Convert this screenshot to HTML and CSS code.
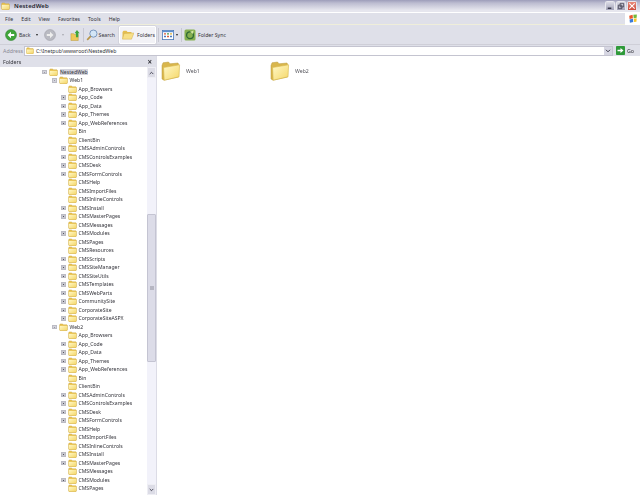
FILE: index.html
```html
<!DOCTYPE html>
<html lang="en">
<head>
<meta charset="utf-8">
<title>NestedWeb</title>
<link rel="stylesheet" href="styles.css">
</head>
<body>
<svg class="defs" width="0" height="0" aria-hidden="true">
  <defs>
    <linearGradient id="fg" x1="0" y1="0" x2="1" y2="1"><stop offset="0" stop-color="#fff8c8"/><stop offset="1" stop-color="#f5d768"/></linearGradient>
    <symbol id="folder" viewBox="0 0 16 14">
      <path d="M1 3.5 2 1.5h4.5l1 1.5H14l1 1v8.5l-1 1H2l-1-1z" fill="#e9c24e" stroke="#c4a244" stroke-width=".7"/>
      <path d="M1.6 5h12.8v7.700H1.6z" fill="url(#fg)"/>
    </symbol>
    <symbol id="bigfolder" viewBox="0 0 20 20">
      <path d="M1 4.5 2 1.8 7.5 1l1.5 1.8 8 -.8 .6 1.2V16L3 19.2 1 18z" fill="#d9b64c" stroke="#b99a3e" stroke-width=".5"/>
      <path d="M2.6 6.5 18.6 3.8 18 15.8 3.2 19.2z" fill="url(#fg)" stroke="#d8b94e" stroke-width=".6"/>
    </symbol>
  </defs>
</svg>
<div class="window">
  <header class="titlebar">
    <svg class="title-icon" viewBox="0 0 16 14"><use href="#folder"/></svg>
    <span class="title-text">NestedWeb</span>
    <div class="caption">
      <span class="cap-btn">
        <svg viewBox="0 0 9 9"><path d="M2 7h4" stroke="#223" stroke-width="1.4"/></svg>
      </span>
      <span class="cap-btn">
        <svg viewBox="0 0 9 9"><path d="M3.5 1.5h4v4h-4zM1.5 3.5h4v4h-4z" fill="none" stroke="#334" stroke-width=".8"/></svg>
      </span>
      <span class="cap-btn close">
        <svg viewBox="0 0 9 9"><path d="M1.5 1.5l6 6M7.5 1.5l-6 6" stroke="#fff" stroke-width="1.2"/></svg>
      </span>
    </div>
  </header>

  <nav class="menubar">
    <span>File</span><span>Edit</span><span>View</span><span>Favorites</span><span>Tools</span><span>Help</span>
    <div class="flag">
      <svg viewBox="0 0 12 12">
        <path d="M1.5 2.2 5.5 1l.4 4-4 1z" fill="#e8542a"/>
        <path d="M6.4 1 10.6 .6 10.4 4.6 6.8 5z" fill="#74b83a"/>
        <path d="M1.9 6.6 5.9 5.6l.4 4-4 1z" fill="#3a7ad8"/>
        <path d="M6.9 5.6l3.5-.4-.3 4-2.8.4z" fill="#f5c52a"/>
      </svg>
    </div>
  </nav>

  <div class="toolbar">
    <svg class="tool-back" viewBox="0 0 12 12"><circle cx="6" cy="6" r="5.5" fill="#3fa53a" stroke="#2c7d2c" stroke-width=".5"/><path d="M9.2 5H6V2.8L2.6 6 6 9.2V7h3.2z" fill="#fff"/></svg>
    <span class="tool-label back-label">Back</span>
    <span class="caret"></span>
    <svg class="tool-fwd" viewBox="0 0 12 12"><circle cx="6" cy="6" r="5.5" fill="#b9bac2" stroke="#9a9ba4" stroke-width=".5"/><path d="M2.8 5H6V2.8L9.4 6 6 9.2V7H2.8z" fill="#eee"/></svg>
    <span class="caret pale"></span>
    <svg class="tool-up" viewBox="0 0 12 13"><path d="M1 5h3l1 1h4v6.5H1z" fill="#eec95a" stroke="#b8963a" stroke-width=".5"/><path d="M6.5 9V4.5H5L7.6 1l2.9 3.500H9V9z" fill="#3fa53a"/></svg>
    <span class="sep tight"></span>
    <svg class="tool-search" viewBox="0 0 12 12"><circle cx="7.400" cy="4.600" r="3.600" fill="#d3e6f7" stroke="#6f8fb8" stroke-width=".9"/><path d="M4.800 7.200 1.200 10.800" stroke="#b8964a" stroke-width="1.700"/></svg>
    <span class="tool-label">Search</span>
    <div class="folders-btn">
      <svg viewBox="0 0 12 10"><path d="M.5 2 1.500.8h3l1 1.200h4v7h-9z" fill="#e3bd50"/><path d="M2 3.500 12 3 9.500 9.200H.5z" fill="#f7df86" stroke="#c9a644" stroke-width=".4"/></svg>
      <span class="tool-label">Folders</span>
    </div>
    <span class="sep wide"></span>
    <svg class="tool-views" viewBox="0 0 12 10">
      <rect x=".4" y=".4" width="11.200" height="9.200" fill="#fff" stroke="#4a78b8" stroke-width=".8"/>
      <path d="M.8.800h10.400v1.400H.8z" fill="#5d8fd0"/>
      <path d="M2 3.200h2v1.400H2z" fill="#d85a3a"/><path d="M5 3.200h2v1.400H5z" fill="#4a9a4a"/><path d="M8 3.200h2v1.400H8z" fill="#e0b23a"/>
      <path d="M2 5.800h2v1.400H2z" fill="#4a78b8"/><path d="M5 5.800h2v1.400H5z" fill="#d85a3a"/><path d="M8 5.800h2v1.400H8z" fill="#4a78b8"/>
    </svg>
    <span class="caret"></span>
    <span class="sep after-views"></span>
    <svg class="tool-sync" viewBox="0 0 12 12"><rect x=".5" y=".5" width="11" height="11" rx="1.500" fill="#86b050"/><circle cx="6" cy="6.200" r="3.400" fill="none" stroke="#2f6a34" stroke-width="1.300"/><path d="M6 2.800 9.500 1.500 9 5z" fill="#d6e8a0"/></svg>
    <span class="tool-label">Folder Sync</span>
  </div>

  <div class="addressbar">
    <span class="addr-label">Address</span>
    <div class="addr-input">
      <svg viewBox="0 0 16 14"><use href="#folder"/></svg>
      <span>C:\Inetpub\wwwroot\NestedWeb</span>
      <span class="addr-drop"><svg viewBox="0 0 7 5"><path d="M1 1l2.500 2.500L6 1" fill="none" stroke="#334" stroke-width="1.200"/></svg></span>
    </div>
    <svg class="go-icon" viewBox="0 0 9 9"><rect width="9" height="9" rx=".8" fill="#2f9a3a"/><path d="M1.500 3.700h3V2l3 2.500-3 2.500V5.300h-3z" fill="#fff"/></svg>
    <span class="go-label">Go</span>
  </div>

  <main class="body">
    <aside class="sidebar">
      <div class="pane-head"><span>Folders</span><span class="pane-x">×</span></div>
      <div class="tree-wrap">
        <div class="tree">
          <div class="row d0"><i class="exp"></i><svg class="fold"><use href="#folder"/></svg><span class="sel">NestedWeb</span></div>
          <div class="row d1"><i class="exp"></i><svg class="fold"><use href="#folder"/></svg><span>Web1</span></div>
          <div class="row d2"><i class="noexp"></i><svg class="fold"><use href="#folder"/></svg><span>App_Browsers</span></div>
          <div class="row d2"><i class="exp plus"></i><svg class="fold"><use href="#folder"/></svg><span>App_Code</span></div>
          <div class="row d2"><i class="exp plus"></i><svg class="fold"><use href="#folder"/></svg><span>App_Data</span></div>
          <div class="row d2"><i class="exp plus"></i><svg class="fold"><use href="#folder"/></svg><span>App_Themes</span></div>
          <div class="row d2"><i class="exp plus"></i><svg class="fold"><use href="#folder"/></svg><span>App_WebReferences</span></div>
          <div class="row d2"><i class="noexp"></i><svg class="fold"><use href="#folder"/></svg><span>Bin</span></div>
          <div class="row d2"><i class="noexp"></i><svg class="fold"><use href="#folder"/></svg><span>ClientBin</span></div>
          <div class="row d2"><i class="exp plus"></i><svg class="fold"><use href="#folder"/></svg><span>CMSAdminControls</span></div>
          <div class="row d2"><i class="exp plus"></i><svg class="fold"><use href="#folder"/></svg><span>CMSControlsExamples</span></div>
          <div class="row d2"><i class="exp plus"></i><svg class="fold"><use href="#folder"/></svg><span>CMSDesk</span></div>
          <div class="row d2"><i class="exp plus"></i><svg class="fold"><use href="#folder"/></svg><span>CMSFormControls</span></div>
          <div class="row d2"><i class="noexp"></i><svg class="fold"><use href="#folder"/></svg><span>CMSHelp</span></div>
          <div class="row d2"><i class="noexp"></i><svg class="fold"><use href="#folder"/></svg><span>CMSImportFiles</span></div>
          <div class="row d2"><i class="noexp"></i><svg class="fold"><use href="#folder"/></svg><span>CMSInlineControls</span></div>
          <div class="row d2"><i class="exp plus"></i><svg class="fold"><use href="#folder"/></svg><span>CMSInstall</span></div>
          <div class="row d2"><i class="exp plus"></i><svg class="fold"><use href="#folder"/></svg><span>CMSMasterPages</span></div>
          <div class="row d2"><i class="noexp"></i><svg class="fold"><use href="#folder"/></svg><span>CMSMessages</span></div>
          <div class="row d2"><i class="exp plus"></i><svg class="fold"><use href="#folder"/></svg><span>CMSModules</span></div>
          <div class="row d2"><i class="noexp"></i><svg class="fold"><use href="#folder"/></svg><span>CMSPages</span></div>
          <div class="row d2"><i class="noexp"></i><svg class="fold"><use href="#folder"/></svg><span>CMSResources</span></div>
          <div class="row d2"><i class="exp plus"></i><svg class="fold"><use href="#folder"/></svg><span>CMSScripts</span></div>
          <div class="row d2"><i class="exp plus"></i><svg class="fold"><use href="#folder"/></svg><span>CMSSiteManager</span></div>
          <div class="row d2"><i class="exp plus"></i><svg class="fold"><use href="#folder"/></svg><span>CMSSiteUtils</span></div>
          <div class="row d2"><i class="exp plus"></i><svg class="fold"><use href="#folder"/></svg><span>CMSTemplates</span></div>
          <div class="row d2"><i class="exp plus"></i><svg class="fold"><use href="#folder"/></svg><span>CMSWebParts</span></div>
          <div class="row d2"><i class="exp plus"></i><svg class="fold"><use href="#folder"/></svg><span>CommunitySite</span></div>
          <div class="row d2"><i class="exp plus"></i><svg class="fold"><use href="#folder"/></svg><span>CorporateSite</span></div>
          <div class="row d2"><i class="exp plus"></i><svg class="fold"><use href="#folder"/></svg><span>CorporateSiteASPX</span></div>
          <div class="row d1"><i class="exp"></i><svg class="fold"><use href="#folder"/></svg><span>Web2</span></div>
          <div class="row d2"><i class="noexp"></i><svg class="fold"><use href="#folder"/></svg><span>App_Browsers</span></div>
          <div class="row d2"><i class="exp plus"></i><svg class="fold"><use href="#folder"/></svg><span>App_Code</span></div>
          <div class="row d2"><i class="exp plus"></i><svg class="fold"><use href="#folder"/></svg><span>App_Data</span></div>
          <div class="row d2"><i class="exp plus"></i><svg class="fold"><use href="#folder"/></svg><span>App_Themes</span></div>
          <div class="row d2"><i class="exp plus"></i><svg class="fold"><use href="#folder"/></svg><span>App_WebReferences</span></div>
          <div class="row d2"><i class="noexp"></i><svg class="fold"><use href="#folder"/></svg><span>Bin</span></div>
          <div class="row d2"><i class="noexp"></i><svg class="fold"><use href="#folder"/></svg><span>ClientBin</span></div>
          <div class="row d2"><i class="exp plus"></i><svg class="fold"><use href="#folder"/></svg><span>CMSAdminControls</span></div>
          <div class="row d2"><i class="exp plus"></i><svg class="fold"><use href="#folder"/></svg><span>CMSControlsExamples</span></div>
          <div class="row d2"><i class="exp plus"></i><svg class="fold"><use href="#folder"/></svg><span>CMSDesk</span></div>
          <div class="row d2"><i class="exp plus"></i><svg class="fold"><use href="#folder"/></svg><span>CMSFormControls</span></div>
          <div class="row d2"><i class="noexp"></i><svg class="fold"><use href="#folder"/></svg><span>CMSHelp</span></div>
          <div class="row d2"><i class="noexp"></i><svg class="fold"><use href="#folder"/></svg><span>CMSImportFiles</span></div>
          <div class="row d2"><i class="noexp"></i><svg class="fold"><use href="#folder"/></svg><span>CMSInlineControls</span></div>
          <div class="row d2"><i class="exp plus"></i><svg class="fold"><use href="#folder"/></svg><span>CMSInstall</span></div>
          <div class="row d2"><i class="exp plus"></i><svg class="fold"><use href="#folder"/></svg><span>CMSMasterPages</span></div>
          <div class="row d2"><i class="noexp"></i><svg class="fold"><use href="#folder"/></svg><span>CMSMessages</span></div>
          <div class="row d2"><i class="exp plus"></i><svg class="fold"><use href="#folder"/></svg><span>CMSModules</span></div>
          <div class="row d2"><i class="noexp"></i><svg class="fold"><use href="#folder"/></svg><span>CMSPages</span></div>
        </div>
        <div class="scrollbar">
          <span class="sb-btn"><svg viewBox="0 0 7 5"><path d="M1 4l2.500-2.500L6 4" fill="none" stroke="#334" stroke-width="1.200"/></svg></span>
          <div class="sb-track"><div class="sb-thumb"><i></i></div></div>
          <span class="sb-btn"><svg viewBox="0 0 7 5"><path d="M1 1l2.500 2.500L6 1" fill="none" stroke="#334" stroke-width="1.200"/></svg></span>
        </div>
      </div>
    </aside>
    <section class="files">
      <div class="file"><svg viewBox="0 0 20 20"><use href="#bigfolder"/></svg><span>Web1</span></div>
      <div class="file"><svg viewBox="0 0 20 20"><use href="#bigfolder"/></svg><span>Web2</span></div>
    </section>
  </main>
</div>
</body>
</html>
```
FILE: styles.css
```css
* { box-sizing: border-box; }
html, body { margin: 0; height: 100%; background: #fff; overflow: hidden; }
.defs { position: absolute; }
.window {
  width: 640px; height: 495px; display: flex; flex-direction: column;
  font-family: "Noto Sans", "Liberation Sans", sans-serif; font-size: 5.3px; color: #33333a;
  filter: blur(.35px);
}
.titlebar {
  height: 13px; flex: none; display: flex; align-items: center; padding: 0 0 1px 1px;
  background: linear-gradient(#9d9dba 0, #bcbcd0 25%, #e6e6ee 85%, #e6e6ee 100%);
  border-bottom: 1px solid #fff;
}
.title-icon { width: 9px; height: 8px; margin-right: 4px; }
.title-text { font-size: 6px; font-weight: 600; color: #22222c; letter-spacing: .12px; }
.caption { margin-left: auto; display: flex; gap: 1px; padding-right: 3px; }
.cap-btn {
  width: 10px; height: 10px; display: flex; align-items: center; justify-content: center;
  background: linear-gradient(#dcdce6, #a2a2b8); border: 1px solid #e8e8ee; border-radius: 1.5px;
}
.cap-btn svg { width: 8px; height: 8px; }
.cap-btn.close { background: linear-gradient(#e88a7a, #cc4a3c); }
.menubar {
  height: 12px; flex: none; display: flex; align-items: center; gap: 8px; padding-left: 5px;
  background: #dfe0e9; border-bottom: 1px solid #efeeda; font-size: 5.2px;
}
.flag {
  margin-left: auto; width: 15px; height: 12px; background: #fff;
  display: flex; align-items: center; justify-content: center;
}
.flag svg { width: 10px; height: 10px; }
.toolbar {
  height: 20px; flex: none; display: flex; align-items: center; padding-left: 5px;
  background: #dfe0e9; border-bottom: 1px solid #cfcfd8;
}
.tool-label { font-size: 5.2px; white-space: nowrap; }
.tool-back { width: 12px; height: 12px; margin-right: 2px; }
.back-label { margin-right: 5px; }
.caret { width: 0; height: 0; border: 1.5px solid transparent; border-top: 2px solid #222; margin-top: 2px; }
.caret.pale { border-top-color: #a8a8b0; margin-left: 6px; }
.tool-fwd { width: 12px; height: 12px; margin-left: 6px; }
.tool-up { width: 11px; height: 12px; margin-left: 6px; }
.sep { width: 1px; height: 14px; background: #c8c8d2; margin: 0 3px 0 5px; }
.sep.tight { margin: 0 2px 0 2px; }
.tool-search { width: 12px; height: 12px; margin-right: 1px; }
.folders-btn {
  display: flex; align-items: center; gap: 3px; height: 18px; width: 37px; margin-left: 4px; padding-left: 2px;
  background: #f2f2f6; border: 1px solid #fff; border-radius: 1px; box-shadow: 0 0 0 .5px #c8c8d2;
}
.folders-btn svg { width: 12px; height: 10px; }
.sep.wide { margin: 0 3px 0 2px; }
.tool-views { width: 12px; height: 10px; margin-right: 2px; }
.tool-sync { width: 12px; height: 12px; margin-right: 2px; }
.sep.after-views { margin: 0 2px 0 3px; }
.addressbar {
  height: 11px; flex: none; display: flex; align-items: center; padding-left: 3px;
  background: #dfe0e9;
}
.addr-label { color: #8a8a94; width: 21px; flex: none; }
.addr-input {
  flex: 1; height: 10px; background: #fff; border: 1px solid #c4c4d0; display: flex; align-items: center; padding-left: 1px;
  font-size: 5.2px; gap: 2px; min-width: 0;
}
.addr-input > svg { width: 8px; height: 7px; flex: none; }
.addr-drop {
  margin-left: auto; width: 8px; height: 8px; background: #d6d6e2; display: flex; align-items: center; justify-content: center;
}
.addr-drop svg { width: 6px; height: 4px; }
.go-icon { width: 9px; height: 9px; margin: 0 2px 0 3px; flex: none; }
.go-label { width: 13px; flex: none; }
.body { flex: 1; display: flex; min-height: 0; }
.sidebar { width: 157px; flex: none; display: flex; flex-direction: column; background: #fff; border-right: 1px solid #dcdce6; }
.pane-head {
  height: 11px; flex: none; display: flex; align-items: center; justify-content: space-between;
  background: #dfe0e9; padding: 0 4px 0 3px;
}
.pane-x { font-size: 8px; font-weight: 700; line-height: 1; }
.tree-wrap { flex: 1; display: flex; min-height: 0; }
.tree { flex: 1; overflow: hidden; padding-top: .5px; }
.row { height: 8.5px; display: flex; align-items: center; white-space: nowrap; font-size: 5.1px; }
.row.d0 { padding-left: 42px; }
.row.d1 { padding-left: 52px; }
.row.d2 { padding-left: 61px; }
.exp, .noexp { width: 4.5px; height: 4.5px; flex: none; margin-right: 2.5px; }
.exp { background: #d4d4dc; border: .5px solid #bbbbc4; position: relative; }
.exp::after {
  content: ""; position: absolute; left: .5px; right: .5px; top: 1.3px; height: .8px; background: #9a9aa4;
}
.exp.plus { background: #c8c8d0; }
.exp.plus::after { background: #55555f; }
.fold { width: 9px; height: 8px; flex: none; margin-right: 1.500px; }
.sel { background: #d4d4dc; padding: 0 .5px; }
.scrollbar { width: 9px; flex: none; display: flex; flex-direction: column; background: #f2f2fa; }
.sb-btn {
  height: 11px; flex: none; display: flex; align-items: center; justify-content: center;
  background: #dcdce6; border: 1px solid #eeeef4;
}
.sb-btn svg { width: 5px; height: 4px; }
.sb-track { flex: 1; padding-top: 136px; }
.sb-thumb {
  height: 148px; background: #dcdce8; border: 1px solid #c4c4d2; border-radius: 1px;
  display: flex; align-items: center; justify-content: center;
}
.sb-thumb i { width: 4px; height: 4px; background: #b6b6c2; }
.files { flex: 1; display: grid; grid-template-columns: 109px 109px; align-content: start; padding: 5px 0 0 4px; font-size: 5.2px; color: #55555c; }
.file { display: flex; align-items: center; gap: 5px; height: 20px; }
.file svg { width: 20px; height: 20px; flex: none; }
```
